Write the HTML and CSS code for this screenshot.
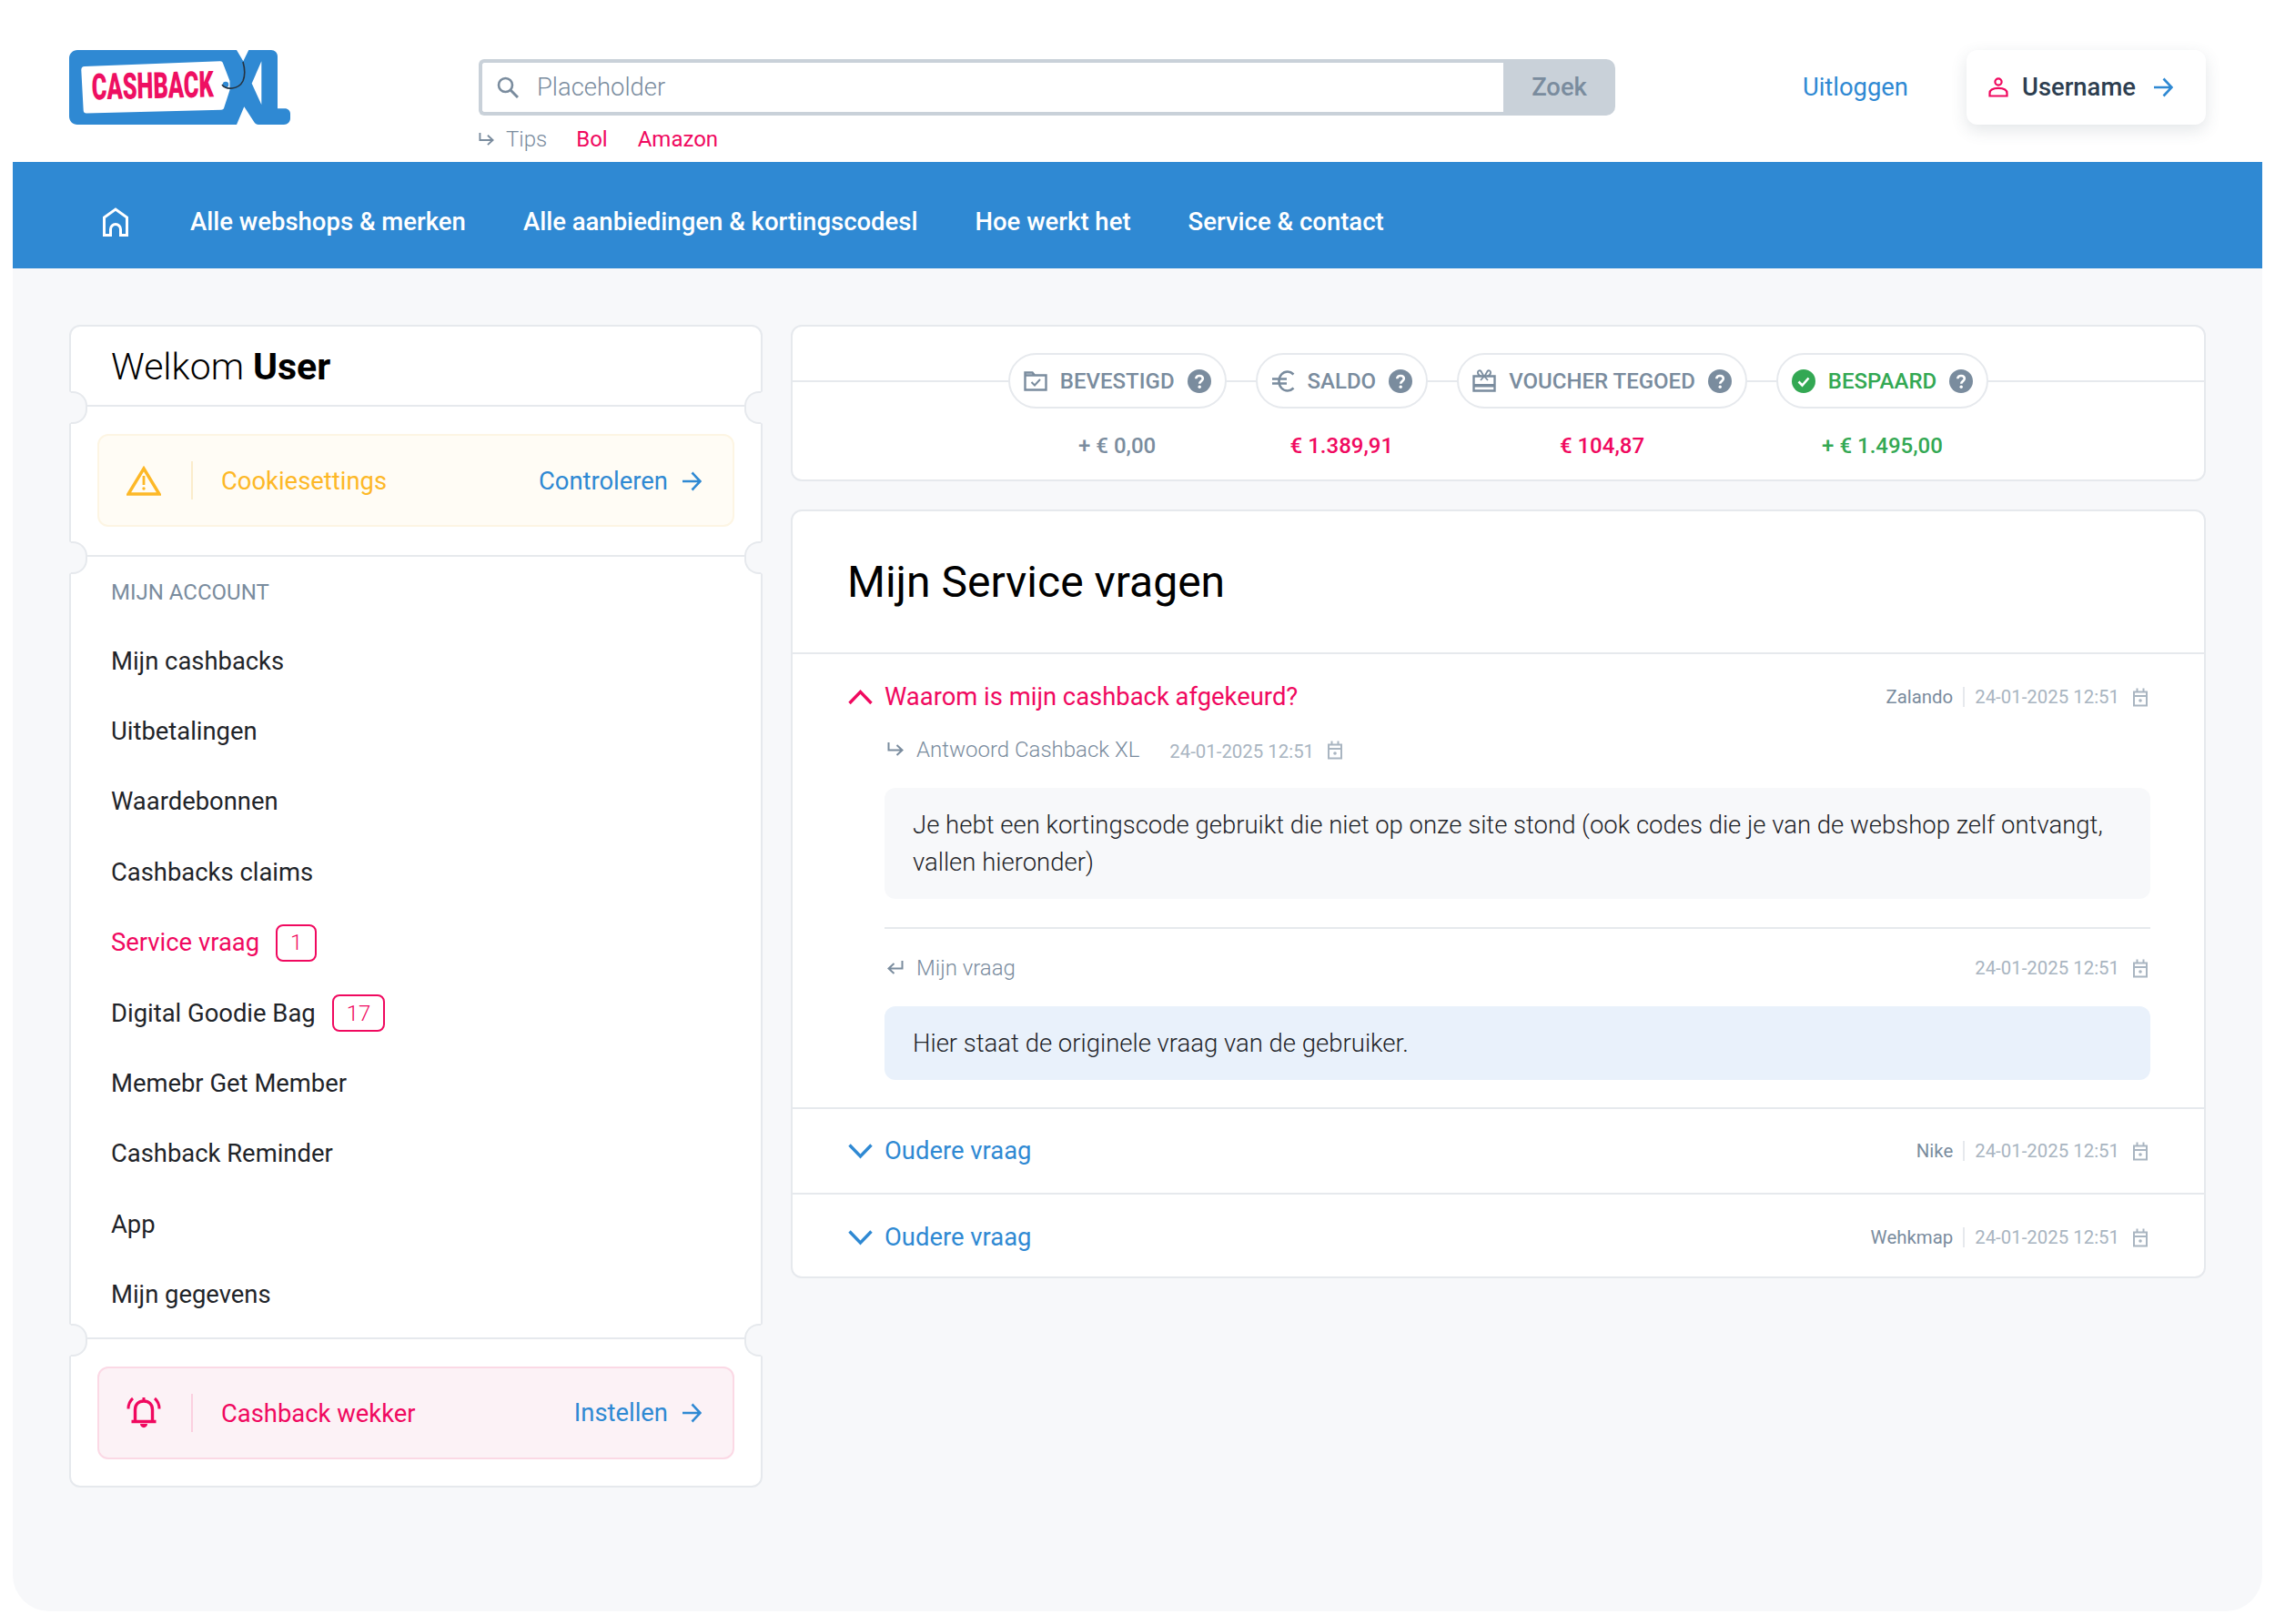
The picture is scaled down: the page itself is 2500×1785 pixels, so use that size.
FILE: index.html
```html
<!DOCTYPE html>
<html lang="nl">
<head>
  <meta charset="UTF-8">
  <meta name="viewport" content="width=device-width, initial-scale=1.0">
  <title>Cashback XL - Mijn Service vragen</title>
  <link rel="stylesheet" href="styles.css">
</head>
<body>
  <svg class="sprite" aria-hidden="true">
    <symbol id="i-arrow" viewBox="0 0 22 22"><path d="M1 11H20M11.5 1.5L20.5 11L11.5 20.5" fill="none" stroke="currentColor" stroke-width="2.6"/></symbol>
    <symbol id="i-cal" viewBox="0 0 16 22"><path d="M1 5.5H15V20.5H1ZM1 10H15M4.5 1.5V5M11.5 1.5V5" fill="none" stroke="currentColor" stroke-width="2"/><circle cx="8" cy="15" r="1.8" fill="currentColor"/></symbol>
    <symbol id="i-reply" viewBox="0 0 18 18"><path d="M1.5 1V9.5H16M10.5 4L16.5 9.5L10.5 15" fill="none" stroke="currentColor" stroke-width="2"/></symbol>
    <symbol id="i-back" viewBox="0 0 18 18"><path d="M16.5 1V9.5H2M7.5 4L1.5 9.5L7.5 15" fill="none" stroke="currentColor" stroke-width="2"/></symbol>
    <symbol id="i-help" viewBox="0 0 26 26"><circle cx="13" cy="13" r="13" fill="#7a8c9e"/><path d="M9.3 10.3C9.3 8.2 11 7 13 7C15.2 7 16.8 8.3 16.8 10.2C16.8 12.8 13.2 13 13.2 15.8" fill="none" stroke="#fff" stroke-width="2.6"/><circle cx="13.2" cy="19.3" r="1.7" fill="#fff"/></symbol>
  </svg>

  <div class="page">
    <header class="top">
      <a class="logo" href="#">
        <svg viewBox="0 0 243 82" width="243" height="82">
          <path fill="#2f89d3" d="M9 0H184L191.3 12.3L197.3 0H222C226 0 229 3 229 7V64.3H237C240.5 64.3 243 67 243 70V75C243 79 240 82 236 82H208C206 82 204.5 81 203.5 79.5L192.3 62.3L184 82H9C4 82 0 78 0 73V9C0 4 4 0 9 0Z"/>
          <path fill="#fff" d="M211.3 12.3V60L200.7 36.7Z"/>
          <path fill="#fff" d="M17 18L166 12.3C167.5 12.3 168.5 13 169 14.5L176.5 34V44L170 64C169.5 65 168.5 65.7 167 65.8L19 69.5C17 69.5 15.7 68.5 15.7 66.5L13.3 22C13.3 19.5 14.5 18 17 18Z"/>
          <text class="logo-text" x="25" y="54.500" textLength="134" lengthAdjust="spacingAndGlyphs" transform="rotate(-1.3 25 54)">CASHBACK</text>
          <circle cx="172" cy="38" r="3.2" fill="#2f89d3"/>
          <path d="M168 38C172 44 186 44 191 34C193.5 28 193 20 191 13" fill="none" stroke="#26323f" stroke-width="1.6"/>
        </svg>
      </a>
      <div class="search-col">
        <form class="search">
          <div class="search-field">
            <svg width="24" height="24" viewBox="0 0 24 24"><circle cx="9.5" cy="9.5" r="7.5" fill="none" stroke="#7a8c9e" stroke-width="2.6"/><path d="M15 15L23 23" stroke="#7a8c9e" stroke-width="3"/></svg>
            <span class="placeholder">Placeholder</span>
          </div>
          <button class="search-btn" type="button">Zoek</button>
        </form>
        <div class="tips">
          <svg class="tips-icon"><use href="#i-reply"/></svg>
          <span class="tips-label">Tips</span>
          <a href="#">Bol</a>
          <a href="#">Amazon</a>
        </div>
      </div>
      <div class="user-actions">
        <a class="logout" href="#">Uitloggen</a>
        <a class="user-card" href="#">
          <svg width="22" height="22" viewBox="0 0 22 22"><circle cx="11" cy="5" r="3.6" fill="none" stroke="#f0095f" stroke-width="2.2"/><path d="M1.500 20.500V17.500C1.500 14 5 11.800 11 11.800C17 11.800 20.500 14 20.500 17.500V20.500Z" fill="none" stroke="#f0095f" stroke-width="2.2"/></svg>
          <span>Username</span>
          <svg class="arrow"><use href="#i-arrow"/></svg>
        </a>
      </div>
    </header>

    <nav class="nav">
      <a class="nav-home" href="#">
        <svg width="28" height="32" viewBox="0 0 28 32"><path d="M1.5 30.5V11L14 2L26.5 11V30.5H19.5V24C19.5 21 17 18.5 14 18.5C11 18.5 8.5 21 8.5 24V30.5Z" fill="none" stroke="#fff" stroke-width="3"/></svg>
      </a>
      <a href="#">Alle webshops &amp; merken</a>
      <a href="#">Alle aanbiedingen &amp; kortingscodesl</a>
      <a href="#">Hoe werkt het</a>
      <a href="#">Service &amp; contact</a>
    </nav>

    <main class="content">
      <aside class="card side">
        <h2 class="welcome">Welkom <b>User</b></h2>
        <div class="cut"></div>
        <div class="side-block">
          <div class="notice notice-warn">
            <svg class="notice-icon" width="38" height="33" viewBox="0 0 38 33"><path d="M19 3L36 31H2Z" fill="none" stroke="#fdb827" stroke-width="3.4"/><path d="M19 11V21" stroke="#fdb827" stroke-width="2.8"/><circle cx="19" cy="25" r="1.7" fill="#fdb827"/></svg>
            <span class="notice-text">Cookiesettings</span>
            <a class="notice-link" href="#">Controleren <svg class="arrow"><use href="#i-arrow"/></svg></a>
          </div>
        </div>
        <div class="cut"></div>
        <div class="side-menu">
          <div class="menu-title">MIJN ACCOUNT</div>
          <a class="menu-item" href="#">Mijn cashbacks</a>
          <a class="menu-item" href="#">Uitbetalingen</a>
          <a class="menu-item" href="#">Waardebonnen</a>
          <a class="menu-item" href="#">Cashbacks claims</a>
          <a class="menu-item active" href="#">Service vraag <span class="badge">1</span></a>
          <a class="menu-item" href="#">Digital Goodie Bag <span class="badge">17</span></a>
          <a class="menu-item" href="#">Memebr Get Member</a>
          <a class="menu-item" href="#">Cashback Reminder</a>
          <a class="menu-item" href="#">App</a>
          <a class="menu-item" href="#">Mijn gegevens</a>
        </div>
        <div class="cut"></div>
        <div class="side-block side-last">
          <div class="notice notice-alarm">
            <svg class="notice-icon" width="38" height="36" viewBox="0 0 38 36"><path d="M9.5 26V14.500C9.500 8.500 13.500 5 19 5C24.500 5 28.500 8.500 28.500 14.500V26M5.500 27.500H32.500" fill="none" stroke="#f0095f" stroke-width="3.400"/><path d="M19 1V5" stroke="#f0095f" stroke-width="3"/><path d="M15 30C15 35.500 23 35.500 23 30Z" fill="#f0095f"/><path d="M7 2C3.500 5 2 9 2 13.500M31 2C34.500 5 36 9 36 13.500" fill="none" stroke="#f0095f" stroke-width="3"/></svg>
            <span class="notice-text">Cashback wekker</span>
            <a class="notice-link" href="#">Instellen <svg class="arrow"><use href="#i-arrow"/></svg></a>
          </div>
        </div>
      </aside>

      <div class="main-col">
        <section class="card stats">
          <div class="stat">
            <div class="pill">
              <svg width="26" height="22" viewBox="0 0 26 22"><path d="M1.500 20.500V1.500H9.500L12 4.500H24.500V20.500ZM1.500 4.500H12" fill="none" stroke="#7a8c9e" stroke-width="2.400"/><path d="M8.500 12L12 15.500L18 9" fill="none" stroke="#7a8c9e" stroke-width="2"/></svg>
              <span>BEVESTIGD</span>
              <svg class="help"><use href="#i-help"/></svg>
            </div>
            <div class="stat-value">+ € 0,00</div>
          </div>
          <div class="stat">
            <div class="pill">
              <svg width="26" height="24" viewBox="0 0 26 24"><path d="M24.500 4.500C22.500 2.500 20.500 1.500 18 1.500C12.500 1.500 8.500 6 8.500 12C8.500 18 12.500 22.500 18 22.500C20.500 22.500 22.500 21.500 24.500 19.500M1 9.500H17M1 14.500H17" fill="none" stroke="#7a8c9e" stroke-width="2.600"/></svg>
              <span>SALDO</span>
              <svg class="help"><use href="#i-help"/></svg>
            </div>
            <div class="stat-value pink">€ 1.389,91</div>
          </div>
          <div class="stat">
            <div class="pill">
              <svg width="26" height="25" viewBox="0 0 26 25"><path d="M1.500 7.500H24.500V23.500H1.500Z" fill="none" stroke="#7a8c9e" stroke-width="2.400"/><rect x="1.500" y="16" width="23" height="3.500" fill="#7a8c9e"/><path d="M12.500 7.500L9.500 2C8 0.500 5.500 1.500 6 4C6.300 5.800 8 7 10 7.500M13.500 7.500L16.500 2C18 0.500 20.500 1.500 20 4C19.700 5.800 18 7 16 7.500M9 12L13 7.500L17 12" fill="none" stroke="#7a8c9e" stroke-width="1.800"/></svg>
              <span>VOUCHER TEGOED</span>
              <svg class="help"><use href="#i-help"/></svg>
            </div>
            <div class="stat-value pink">€ 104,87</div>
          </div>
          <div class="stat">
            <div class="pill pill-green">
              <svg width="26" height="26" viewBox="0 0 26 26"><circle cx="13" cy="13" r="13" fill="#33a853"/><path d="M7.500 13.500L11.500 17.500L18.500 9.500" fill="none" stroke="#fff" stroke-width="2.600"/></svg>
              <span>BESPAARD</span>
              <svg class="help"><use href="#i-help"/></svg>
            </div>
            <div class="stat-value green">+ € 1.495,00</div>
          </div>
        </section>

        <section class="card questions">
          <h1 class="questions-title">Mijn Service vragen</h1>

          <article class="q-item open">
            <div class="q-head">
              <svg class="chevron" width="29" height="18" viewBox="0 0 29 18"><path d="M2.500 16L14.500 3.500L26.500 16" fill="none" stroke="currentColor" stroke-width="3.400"/></svg>
              <span class="q-title">Waarom is mijn cashback afgekeurd?</span>
              <div class="meta"><span class="shop">Zalando</span><span class="date">24-01-2025 12:51</span><svg class="cal"><use href="#i-cal"/></svg></div>
            </div>
            <div class="q-body">
              <div class="msg-head">
                <svg class="msg-icon"><use href="#i-reply"/></svg>
                <span class="msg-label">Antwoord Cashback XL</span>
                <span class="date date-near">24-01-2025 12:51</span>
                <svg class="cal"><use href="#i-cal"/></svg>
              </div>
              <p class="msg">Je hebt een kortingscode gebruikt die niet op onze site stond (ook codes die je van de webshop zelf ontvangt, vallen hieronder)</p>
              <hr class="msg-rule">
              <div class="msg-head">
                <svg class="msg-icon"><use href="#i-back"/></svg>
                <span class="msg-label">Mijn vraag</span>
                <span class="date date-right">24-01-2025 12:51</span>
                <svg class="cal"><use href="#i-cal"/></svg>
              </div>
              <p class="msg msg-user">Hier staat de originele vraag van de gebruiker.</p>
            </div>
          </article>

          <article class="q-item">
            <div class="q-head">
              <svg class="chevron" width="29" height="18" viewBox="0 0 29 18"><path d="M2.500 2.500L14.500 15L26.500 2.500" fill="none" stroke="currentColor" stroke-width="3.400"/></svg>
              <span class="q-title">Oudere vraag</span>
              <div class="meta"><span class="shop">Nike</span><span class="date">24-01-2025 12:51</span><svg class="cal"><use href="#i-cal"/></svg></div>
            </div>
          </article>

          <article class="q-item">
            <div class="q-head">
              <svg class="chevron" width="29" height="18" viewBox="0 0 29 18"><path d="M2.500 2.500L14.500 15L26.500 2.500" fill="none" stroke="currentColor" stroke-width="3.400"/></svg>
              <span class="q-title">Oudere vraag</span>
              <div class="meta"><span class="shop">Wehkmap</span><span class="date">24-01-2025 12:51</span><svg class="cal"><use href="#i-cal"/></svg></div>
            </div>
          </article>
        </section>
      </div>
    </main>
  </div>
</body>
</html>
```
FILE: styles.css
```css
* {
  box-sizing: border-box;
}
body {
  margin: 0;
  background-color: #fff;
  font-family: Roboto, 'Liberation Sans', sans-serif;
  font-size: 27.4px;
  color: #1f2429;
}
a {
  color: inherit;
  text-decoration: none;
}
.sprite {
  display: none;
}
.page {
  margin: 0 14px;
  height: 1771px;
  background-color: #f7f8fa;
  border-radius: 0 0 40px 40px;
  overflow: hidden;
}

/* header */
.top {
  display: flex;
  height: 178px;
  padding: 55px 62px 0;
  background-color: #fff;
}
.logo {
  width: 243px;
  height: 82px;
  margin-right: 207px;
}
.logo-text {
  font-family: Roboto, sans-serif;
  font-weight: 900;
  font-size: 40px;
  fill: #ee0f62;
}
.search-col {
  width: 1249px;
  padding-top: 10px;
}
.search {
  display: flex;
  height: 62px;
}
.search-field {
  flex: 1;
  display: flex;
  align-items: center;
  gap: 20px;
  padding-left: 16px;
  background-color: #fff;
  border: 4px solid #c9d1d9;
  border-right: none;
  border-radius: 6px 0 0 6px;
}
.placeholder {
  font-weight: 300;
  color: #7a8c9e;
}
.search-btn {
  width: 123px;
  border: none;
  border-radius: 0 10px 10px 0;
  background-color: #c9d1d9;
  color: #7a8c9e;
  font-family: inherit;
  font-size: 27.4px;
  font-weight: 500;
}
.tips {
  display: flex;
  align-items: center;
  height: 32px;
  margin-top: 10px;
  font-size: 24px;
  font-weight: 300;
  color: #f0095f;
}
.tips-icon {
  width: 17px;
  height: 17px;
  margin-right: 13px;
  color: #7a8c9e;
}
.tips-label {
  color: #7a8c9e;
  margin-right: 32px;
}
.tips a {
  font-weight: 400;
  margin-right: 33px;
}
.user-actions {
  margin-left: auto;
  display: flex;
  align-items: center;
  gap: 64px;
  height: 82px;
}
.logout {
  color: #2f89d3;
  font-weight: 400;
}
.user-card {
  display: flex;
  align-items: center;
  gap: 15px;
  width: 263px;
  height: 82px;
  padding-left: 24px;
  background-color: #fff;
  border-radius: 12px;
  box-shadow: 0 6px 18px rgba(60, 75, 90, 0.14);
  font-weight: 500;
  color: #2d3e50;
}
.arrow {
  width: 22px;
  height: 22px;
  color: #2f89d3;
}
.user-card .arrow {
  margin-left: 4px;
}

/* navigation */
.nav {
  display: flex;
  align-items: center;
  gap: 63px;
  height: 117px;
  padding: 14px 0 0 99px;
  background-color: #2f89d3;
  color: #fff;
  font-size: 27.5px;
  font-weight: 500;
}
.nav-home {
  display: flex;
  margin-right: 5px;
}

/* layout */
.content {
  display: grid;
  grid-template-columns: 762px 1555px;
  gap: 31px;
  align-items: start;
  padding: 62px 62px 0;
}
.card {
  background-color: #fff;
  border: 2px solid #e6e9ed;
  border-radius: 12px;
}
.main-col {
  display: flex;
  flex-direction: column;
  gap: 31px;
}

/* sidebar */
.welcome {
  margin: 0;
  height: 86px;
  padding: 1px 0 0 44px;
  font-size: 41px;
  font-weight: 300;
  line-height: 86px;
  color: #000;
}
.welcome b {
  font-weight: 700;
}
.cut {
  position: relative;
  height: 2px;
  background-color: #e6e9ed;
}
.cut::before,
.cut::after {
  content: '';
  position: absolute;
  top: -15px;
  width: 16px;
  height: 32px;
  background-color: #f7f8fa;
  border: 2px solid #e6e9ed;
}
.cut::before {
  left: -2px;
  border-left-color: #f7f8fa;
  border-radius: 0 16px 16px 0;
}
.cut::after {
  right: -2px;
  border-right-color: #f7f8fa;
  border-radius: 16px 0 0 16px;
}
.side-block {
  padding: 30px 29px 31px;
}
.side-last {
  padding: 30px 29px 29px;
}
.notice {
  display: flex;
  align-items: center;
  height: 102px;
  padding: 0 34px 0 30px;
  border: 2px solid;
  border-radius: 12px;
}
.notice-icon {
  flex-shrink: 0;
}
.notice-text {
  margin-left: 33px;
  padding-left: 31px;
  height: 42px;
  line-height: 44px;
  border-left: 2px solid;
}
.notice-link {
  display: flex;
  align-items: center;
  gap: 15px;
  margin-left: auto;
  padding-top: 1px;
  color: #2f89d3;
}
.notice-warn {
  background-color: #fffcf5;
  border-color: #fdf5e3;
}
.notice-warn .notice-text {
  color: #fdb827;
  border-left-color: #fbeccb;
}
.notice-alarm {
  background-color: #fcf2f6;
  border-color: #fbd9e5;
}
.notice-alarm .notice-text {
  color: #f0095f;
  border-left-color: #fbd0df;
}
.side-menu {
  padding: 0 0 8px 44px;
}
.menu-title {
  height: 76px;
  padding-top: 24px;
  font-size: 24px;
  line-height: 30px;
  color: #7a8c9e;
}
.menu-item {
  display: flex;
  align-items: center;
  gap: 18px;
  height: 77.4px;
}
.menu-item.active {
  color: #f0095f;
}
.badge {
  display: flex;
  align-items: center;
  justify-content: center;
  min-width: 44px;
  height: 41px;
  padding: 0 14px;
  border: 2px solid #f0095f;
  border-radius: 8px;
  font-size: 24px;
  font-weight: 300;
  color: #f0095f;
}

/* stats */
.stats {
  position: relative;
  display: flex;
  justify-content: center;
  gap: 32px;
  height: 172px;
  padding-top: 29px;
}
.stats::before {
  content: '';
  position: absolute;
  left: 0;
  right: 0;
  top: 59px;
  height: 2px;
  background-color: #e6e9ed;
}
.stat {
  position: relative;
  display: flex;
  flex-direction: column;
  align-items: center;
}
.pill {
  display: flex;
  align-items: center;
  gap: 14px;
  height: 61px;
  padding: 0 15px;
  background-color: #fff;
  border: 2px solid #e6e9ed;
  border-radius: 31px;
  font-size: 24px;
  font-weight: 500;
  color: #7a8c9e;
}
.pill-green {
  color: #33a853;
}
.help {
  width: 26px;
  height: 26px;
}
.stat-value {
  margin-top: 27px;
  font-size: 24px;
  font-weight: 500;
  line-height: 28px;
  color: #7a8c9e;
}
.stat-value.pink {
  color: #f0095f;
}
.stat-value.green {
  color: #33a853;
}

/* questions */
.questions-title {
  margin: 0;
  height: 155px;
  padding-left: 60px;
  font-size: 48px;
  font-weight: 400;
  line-height: 155px;
  color: #000;
}
.q-item {
  border-top: 2px solid #e6e9ed;
}
.q-head {
  display: flex;
  align-items: center;
  height: 92px;
  padding: 0 62px 0 60px;
  color: #2f89d3;
}
.q-item.open .q-head {
  height: 93px;
  color: #f0095f;
}
.q-item:last-child .q-head {
  height: 90px;
  padding-top: 4px;
}
.chevron {
  margin-right: 12px;
}
.meta {
  display: flex;
  align-items: center;
  margin-left: auto;
}
.shop {
  padding-right: 11px;
  border-right: 2px solid #e6e9ed;
  font-size: 20.4px;
  line-height: 22px;
  color: #7a8c9e;
}
.date {
  font-size: 20.4px;
  color: #a9b5c1;
}
.meta .date {
  padding-left: 11px;
}
.cal {
  width: 16px;
  height: 22px;
  margin-left: 15px;
  color: #a9b5c1;
}
.q-body {
  padding: 0 59px 30px 101px;
}
.msg-head {
  display: flex;
  align-items: center;
  height: 24px;
  padding-left: 3px;
}
.msg-icon {
  width: 18px;
  height: 18px;
  color: #7a8c9e;
}
.msg-label {
  margin-left: 14px;
  font-size: 24px;
  font-weight: 300;
  color: #7a8c9e;
}
.date-near {
  margin-left: 33px;
  margin-top: 4px;
}
.date-right {
  margin-left: auto;
}
.date-right + .cal {
  margin-right: 3px;
}
.msg {
  margin: 30px 0 0;
  padding: 20px 31px;
  background-color: #f7f8fa;
  border-radius: 12px;
  font-size: 27.5px;
  font-weight: 300;
  line-height: 41px;
}
.msg-user {
  background-color: #e9f1fb;
}
.msg-rule {
  height: 2px;
  margin: 31px 0;
  border: none;
  background-color: #e6e9ed;
}
```
